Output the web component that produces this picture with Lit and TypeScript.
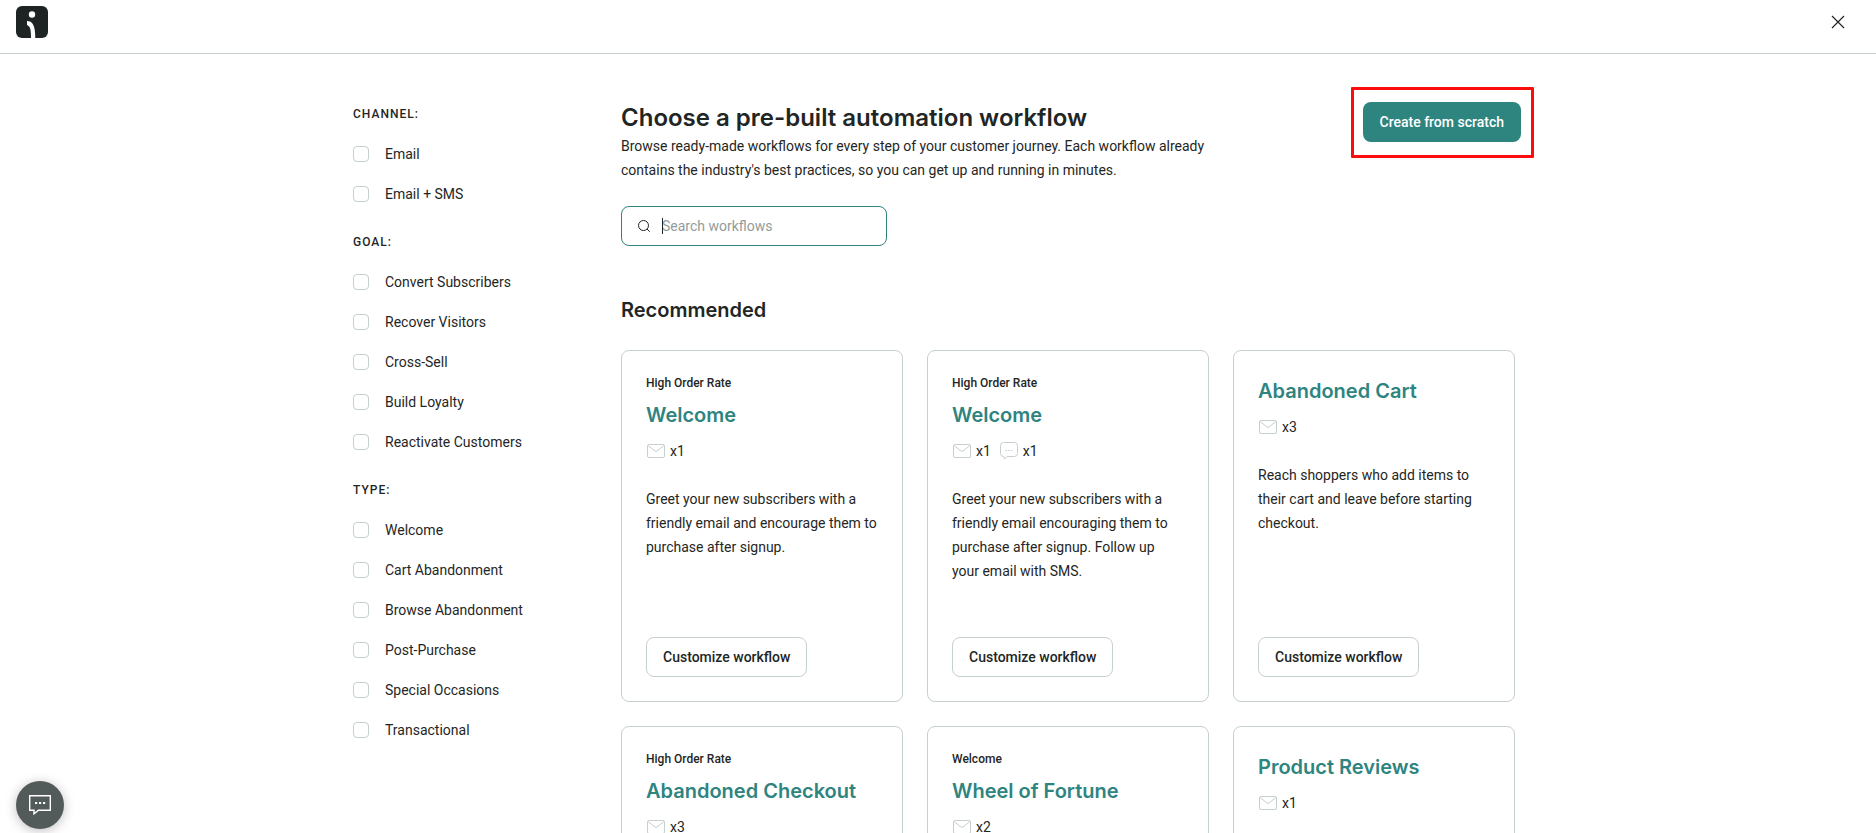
import { LitElement, html, css, svg, nothing } from "lit";
import { customElement, property } from "lit/decorators.js";

interface Workflow {
  tag?: string;
  title: string;
  emails: number;
  sms?: number;
  text?: string;
}

const FILTERS: { title: string; options: string[] }[] = [
  { title: "CHANNEL:", options: ["Email", "Email + SMS"] },
  {
    title: "GOAL:",
    options: ["Convert Subscribers", "Recover Visitors", "Cross-Sell", "Build Loyalty", "Reactivate Customers"],
  },
  {
    title: "TYPE:",
    options: ["Welcome", "Cart Abandonment", "Browse Abandonment", "Post-Purchase", "Special Occasions", "Transactional"],
  },
];

const WORKFLOWS: Workflow[] = [
  {
    tag: "High Order Rate",
    title: "Welcome",
    emails: 1,
    text: "Greet your new subscribers with a friendly email and encourage them to purchase after signup.",
  },
  {
    tag: "High Order Rate",
    title: "Welcome",
    emails: 1,
    sms: 1,
    text: "Greet your new subscribers with a friendly email encouraging them to purchase after signup. Follow up your email with SMS.",
  },
  {
    title: "Abandoned Cart",
    emails: 3,
    text: "Reach shoppers who add items to their cart and leave before starting checkout.",
  },
  { tag: "High Order Rate", title: "Abandoned Checkout", emails: 3 },
  { tag: "Welcome", title: "Wheel of Fortune", emails: 2 },
  { title: "Product Reviews", emails: 1 },
];

const mailIcon = html`<svg width="20" height="20" viewBox="0 0 20 20" fill="none" stroke="#c6d0ce" aria-hidden="true">
  ${svg`<rect x="1.5" y="3.5" width="17" height="13" rx="1.5" /><path d="M2 4.5 9 10q1 .8 2 0l7-5.500" />`}
</svg>`;

const smsIcon = html`<svg width="20" height="20" viewBox="0 0 20 20" fill="none" stroke="#c6d0ce" aria-hidden="true">
  ${svg`<path d="M4.500 1.500h11a3 3 0 0 1 3 3v8a3 3 0 0 1-3 3H8.200L5.500 18 4.800 15.500a3 3 0 0 1-3.300-3v-8a3 3 0 0 1 3-3Z" />
  <path d="M6.500 9.500h1.600M9.200 9.500h1.600M11.900 9.500h1.600" />`}
</svg>`;

@customElement("workflow-card")
class WorkflowCard extends LitElement {
  @property({ attribute: false }) workflow!: Workflow;

  static styles = css`
    :host {
      display: flex;
      flex-direction: column;
      align-items: flex-start;
      box-sizing: border-box;
      padding: 24px;
      border: 1px solid #c6d0ce;
      border-radius: 8px;
      background: #fff;
    }
    .tag {
      font-size: 12px;
      font-weight: 500;
      line-height: 16px;
      margin: 0 0 8px;
    }
    .title {
      margin: 0 0 8px;
      font-family: Inter, "Open Sans", sans-serif;
      font-size: 20px;
      font-weight: 600;
      line-height: 32px;
      color: #2e847f;
    }
    .counts {
      display: flex;
      gap: 8px;
      line-height: 24px;
      margin-bottom: 24px;
    }
    .count {
      display: flex;
      align-items: center;
      gap: 4px;
    }
    .text {
      margin: 0 0 24px;
      line-height: 24px;
    }
    .action {
      box-sizing: border-box;
      height: 40px;
      margin-top: auto;
      padding: 0 16px;
      border: 1px solid #c6d0ce;
      border-radius: 8px;
      background: #fff;
      color: inherit;
      font: inherit;
      font-weight: 500;
      cursor: pointer;
    }
  `;

  render() {
    const w = this.workflow;
    return html`
      ${w.tag ? html`<p class="tag">${w.tag}</p>` : nothing}
      <h3 class="title">${w.title}</h3>
      <div class="counts">
        <span class="count">${mailIcon}x${w.emails}</span>
        ${w.sms ? html`<span class="count">${smsIcon}x${w.sms}</span>` : nothing}
      </div>
      ${w.text ? html`<p class="text">${w.text}</p>` : nothing}
      <button class="action" type="button">Customize workflow</button>
    `;
  }
}

@customElement("app-root")
class AppRoot extends LitElement {
  static styles = css`
    :host {
      display: flex;
      flex-direction: column;
      height: 100vh;
      overflow: hidden;
      background: #fff;
      color: #1f2624;
      font-family: Roboto, sans-serif;
      font-size: 14px;
      line-height: 24px;
    }
    .topbar {
      flex: none;
      display: flex;
      justify-content: space-between;
      align-items: flex-start;
      padding: 6px 28px 15px 16px;
      border-bottom: 1px solid #c6d0ce;
    }
    .logo,
    .logo svg,
    .close svg {
      display: block;
    }
    .close {
      padding: 6px 0;
      margin: 0;
      border: 0;
      background: none;
      color: inherit;
      cursor: pointer;
    }
    .page {
      flex: 1;
      min-height: 0;
      overflow-y: auto;
      scrollbar-width: none;
    }
    .content {
      box-sizing: border-box;
      display: grid;
      grid-template-columns: 268px minmax(0, 1fr);
      max-width: 1200px;
      margin: 0 auto;
      padding: 48px 17px 24px 15px;
    }
    .group {
      margin: 0 0 16px;
      padding: 0;
      border: 0;
    }
    .group-title {
      padding: 0;
      margin-bottom: 8px;
      font-size: 12px;
      font-weight: 500;
      letter-spacing: 1px;
    }
    .option {
      display: flex;
      align-items: center;
      gap: 16px;
      padding: 8px 0;
    }
    .box {
      appearance: none;
      width: 16px;
      height: 16px;
      margin: 0;
      border: 1px solid #c6d0ce;
      border-radius: 4px;
      background: #fff;
    }
    .box:checked {
      background: #2e847f;
      border-color: #2e847f;
    }
    .intro {
      display: flex;
      justify-content: space-between;
      align-items: flex-start;
      margin-bottom: 24px;
    }
    .intro-text {
      max-width: 600px;
    }
    .heading,
    .section {
      margin: 0;
      font-family: Inter, "Open Sans", sans-serif;
      font-weight: 600;
      line-height: 32px;
    }
    .heading {
      font-size: 24px;
    }
    .section {
      margin: 48px 0 24px;
      font-size: 20px;
    }
    .lead {
      margin: 0;
    }
    .create-wrap {
      position: relative;
    }
    .highlight {
      position: absolute;
      inset: -15px -13px -16px -12px;
      border: 3px solid #fb0d0d;
      border-radius: 1px;
      pointer-events: none;
    }
    .create {
      display: block;
      height: 40px;
      padding: 0 17px;
      border: 0;
      border-radius: 8px;
      background: #2e847f;
      color: #fff;
      font: inherit;
      font-weight: 500;
      cursor: pointer;
    }
    .search {
      position: relative;
      box-sizing: border-box;
      display: flex;
      align-items: center;
      gap: 12px;
      width: 266px;
      height: 40px;
      padding: 0 16px;
      border: 1px solid #2e847f;
      border-radius: 8px;
    }
    .search svg {
      flex: none;
    }
    .field {
      flex: 1;
      min-width: 0;
      padding: 0;
      border: 0;
      outline: 0;
      background: none;
      color: inherit;
      font: inherit;
    }
    .field::placeholder {
      color: #929c9a;
      opacity: 1;
    }
    .caret {
      position: absolute;
      left: 40px;
      top: 11px;
      width: 1px;
      height: 16px;
      background: #1f2624;
    }
    .cards {
      display: grid;
      grid-template-columns: repeat(3, minmax(0, 1fr));
      grid-auto-rows: minmax(352px, auto);
      gap: 24px;
      padding-right: 6px;
    }
    .chat {
      position: fixed;
      left: 16px;
      bottom: 4px;
      display: flex;
      align-items: center;
      justify-content: center;
      width: 48px;
      height: 48px;
      padding: 0;
      border: 0;
      border-radius: 50%;
      background: #525b59;
      box-shadow: 0 2px 12px rgba(0, 0, 0, 0.25);
      cursor: pointer;
    }
  `;

  render() {
    return html`
      <header class="topbar">
        <a class="logo" href="#" aria-label="Home">
          <svg width="32" height="32" viewBox="0 0 32 32">
            <rect width="32" height="32" rx="6" fill="#1d2423" />
            <circle cx="16" cy="8.500" r="3.200" fill="#fff" />
            <path d="M11 15c5.500 0 8.300 4 8.300 17H15c0-8-.5-11.500-4-13Z" fill="#fff" />
          </svg>
        </a>
        <button class="close" type="button" aria-label="Close">
          <svg width="20" height="20" viewBox="0 0 20 20" stroke="#1f2624" stroke-width="1.200">
            <path d="M4 4l12 12M16 4L4 16" />
          </svg>
        </button>
      </header>
      <div class="page">
        <div class="content">
          <aside>
            ${FILTERS.map(
              (group) => html`
                <fieldset class="group">
                  <legend class="group-title">${group.title}</legend>
                  ${group.options.map(
                    (option) => html`<label class="option"><input class="box" type="checkbox" />${option}</label>`
                  )}
                </fieldset>
              `
            )}
          </aside>
          <main>
            <div class="intro">
              <div class="intro-text">
                <h1 class="heading">Choose a pre-built automation workflow</h1>
                <p class="lead">
                  Browse ready-made workflows for every step of your customer journey. Each workflow already contains
                  the industry's best practices, so you can get up and running in minutes.
                </p>
              </div>
              <div class="create-wrap">
                <button class="create" type="button">Create from scratch</button>
                <div class="highlight"></div>
              </div>
            </div>
            <div class="search">
              <svg width="12" height="12" viewBox="0 0 12 12" fill="none" stroke="#1f2624" aria-hidden="true">
                <circle cx="5.500" cy="5.500" r="5" />
                <path d="M9 9l2.700 2.700" />
              </svg>
              <input class="field" type="text" placeholder="Search workflows" aria-label="Search workflows" />
              <span class="caret"></span>
            </div>
            <h2 class="section">Recommended</h2>
            <div class="cards">
              ${WORKFLOWS.map((w) => html`<workflow-card .workflow=${w}></workflow-card>`)}
            </div>
          </main>
        </div>
      </div>
      <button class="chat" type="button" aria-label="Open chat">
        <svg width="24" height="22" viewBox="0 0 24 22" fill="none" stroke="#fff" stroke-width="1.400">
          <path d="M1.700 1.700h20.600v14.600H10.500L6 19.800v-3.500H1.700Z" />
          <path d="M7 9h2.200M11 9h2.200M15 9h2.200" stroke-width="2" />
        </svg>
      </button>
    `;
  }
}
